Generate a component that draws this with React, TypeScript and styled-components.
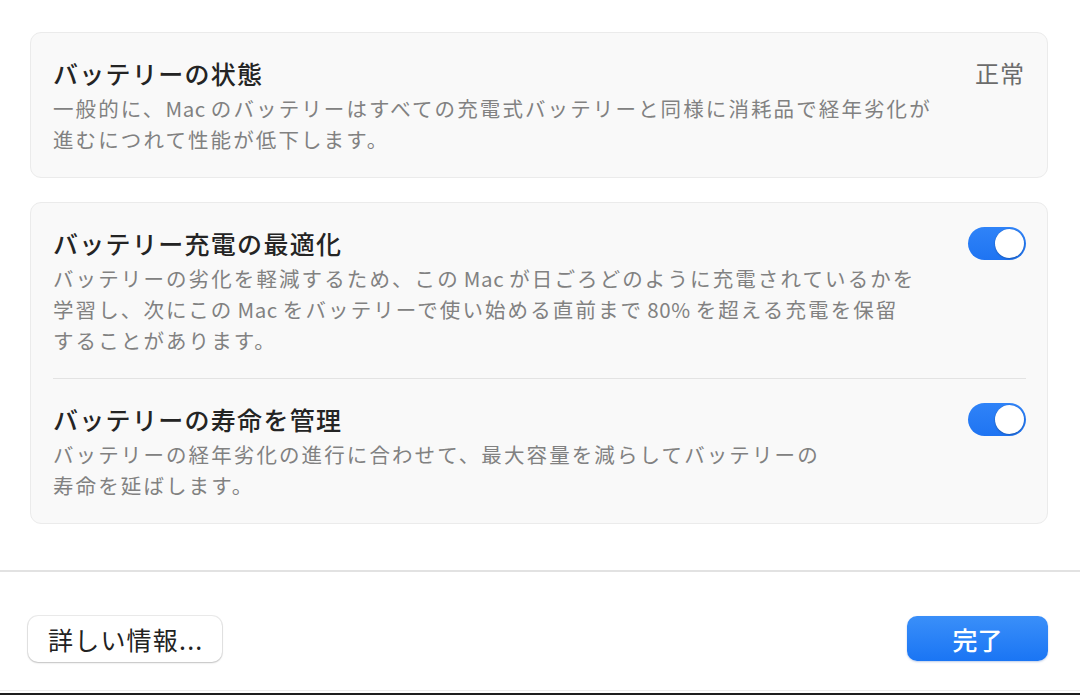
import React from 'react';
import styled, {createGlobalStyle} from "styled-components";

const GlobalStyle = createGlobalStyle`
  * { box-sizing: border-box; }
  html, body {
    margin: 0;
    padding: 0;
    background: #ffffff;
  }
  body {
    font-family: "Noto Sans CJK JP", "Noto Sans", sans-serif;
    -webkit-font-smoothing: antialiased;
  }
`

// text pieces: plain strings are Japanese, {latin} pieces get the auto spacing macOS adds
type Piece = string | { latin: string, tight?: boolean }

const rows: { title: string, lines: Piece[][] }[] = [
    {
        title: 'バッテリー充電の最適化',
        lines: [
            ['バッテリーの劣化を軽減するため、この', {latin: 'Mac'}, 'が日ごろどのように充電されているかを'],
            ['学習し、次にこの', {latin: 'Mac'}, 'をバッテリーで使い始める直前まで', {latin: '80%'}, 'を超える充電を保留'],
            ['することがあります。'],
        ],
    },
    {
        title: 'バッテリーの寿命を管理',
        lines: [
            ['バッテリーの経年劣化の進行に合わせて、最大容量を減らしてバッテリーの'],
            ['寿命を延ばします。'],
        ],
    },
]

const renderLines = (lines: Piece[][]) => lines.map((line, i) => (
    <React.Fragment key={i}>
        {line.map((piece, j) => typeof piece === 'string'
            ? <React.Fragment key={j}>{piece}</React.Fragment>
            : <Latin key={j} $tight={piece.tight}>{piece.latin}</Latin>)}
        {i < lines.length - 1 && <br/>}
    </React.Fragment>
))

export default function App() {
    return (
        <>
            <GlobalStyle/>
            <Sheet>
                <Content>
                    <Card>
                        <Row>
                            <TextBlock>
                                <Title>バッテリーの状態</Title>
                                <Description>
                                    {renderLines([
                                        ['一般的に、', {latin: 'Mac', tight: true}, 'のバッテリーはすべての充電式バッテリーと同様に消耗品で経年劣化が'],
                                        ['進むにつれて性能が低下します。'],
                                    ])}
                                </Description>
                            </TextBlock>
                            <Status>正常</Status>
                        </Row>
                    </Card>
                    <Card>
                        {rows.map((row, index) => (
                            <Row key={index} $divided={index > 0}>
                                <TextBlock>
                                    <Title>{row.title}</Title>
                                    <Description>{renderLines(row.lines)}</Description>
                                </TextBlock>
                                <Toggle $on>
                                    <Knob/>
                                </Toggle>
                            </Row>
                        ))}
                    </Card>
                </Content>
                <Footer>
                    <SecondaryButton>詳しい情報...</SecondaryButton>
                    <PrimaryButton>完了</PrimaryButton>
                </Footer>
                <WindowEdge/>
            </Sheet>
        </>
    );
}

const Sheet = styled.div`
  width: 1080px;
  height: 695px;
  display: flex;
  flex-direction: column;
  background: #ffffff;
  overflow: hidden;
`

const Content = styled.div`
  display: flex;
  flex-direction: column;
  gap: 24px;
  padding: 32px 32px 46px 30px;
  border-bottom: 2px solid #e2e2e2;
`

const Card = styled.div`
  background: #f9f9f9;
  border: 1px solid #ebebeb;
  border-radius: 11px;
  padding: 0 21px 0 22px;
`

const Row = styled.div<{ $divided?: boolean }>`
  display: flex;
  align-items: flex-start;
  justify-content: space-between;
  padding: 24px 0 22px;
  border-top: ${props => props.$divided ? '1px solid #e3e3e3' : 'none'};
`

const TextBlock = styled.div`
  display: flex;
  flex-direction: column;
  gap: 4px;
`

const Title = styled.div`
  font-size: 25px;
  line-height: 32px;
  font-weight: 500;
  letter-spacing: 1.3px;
  color: #242424;
  white-space: nowrap;
`

const Description = styled.div`
  font-size: 20.5px;
  line-height: 31px;
  letter-spacing: 2.1px;
  color: #818181;
  white-space: nowrap;
`

const Latin = styled.span<{ $tight?: boolean }>`
  margin: 0 5px 0 ${props => props.$tight ? '0' : '4px'};
  letter-spacing: 0.6px;
`

const Status = styled.div`
  font-size: 24px;
  line-height: 32px;
  letter-spacing: 1px;
  color: #6c6c6c;
  margin-right: 1px;
`

const Toggle = styled.div<{ $on?: boolean }>`
  position: relative;
  flex-shrink: 0;
  width: 58px;
  height: 33px;
  border-radius: 17px;
  background: ${props => props.$on ? 'linear-gradient(#2f83f8, #1f74f2)' : '#e0e0e0'};
  margin-top: 0;
`

const Knob = styled.span`
  position: absolute;
  top: 2px;
  right: 2px;
  width: 29px;
  height: 29px;
  border-radius: 50%;
  background: #ffffff;
  box-shadow: 0 0 0 0.5px rgba(0, 0, 0, 0.08), 0 1px 2px rgba(0, 0, 0, 0.2);
`

const Footer = styled.div`
  flex: 1;
  display: flex;
  align-items: flex-start;
  justify-content: space-between;
  padding: 44px 32px 0 28px;
`

const SecondaryButton = styled.button`
  height: 46px;
  padding: 0 19px 0 20px;
  border: none;
  border-radius: 10px;
  background: #ffffff;
  box-shadow: 0 0 0 1px rgba(0, 0, 0, 0.08), 0 1px 2px rgba(0, 0, 0, 0.18);
  font-family: "Noto Sans CJK JP", "Noto Sans", sans-serif;
  font-size: 25px;
  line-height: 46px;
  letter-spacing: 1.2px;
  color: #222222;
  cursor: pointer;
`

const PrimaryButton = styled.button`
  width: 141px;
  height: 45px;
  border: none;
  border-radius: 10px;
  background: linear-gradient(#3a8ff9, #1a75f4);
  box-shadow: 0 1px 2px rgba(0, 60, 160, 0.25);
  font-family: "Noto Sans CJK JP", "Noto Sans", sans-serif;
  font-size: 25px;
  font-weight: 500;
  line-height: 45px;
  color: #ffffff;
  cursor: pointer;
`

const WindowEdge = styled.div`
  height: 5px;
  border-top: 1px solid #ededed;
  border-bottom: 2px solid #1e1e1e;
`
